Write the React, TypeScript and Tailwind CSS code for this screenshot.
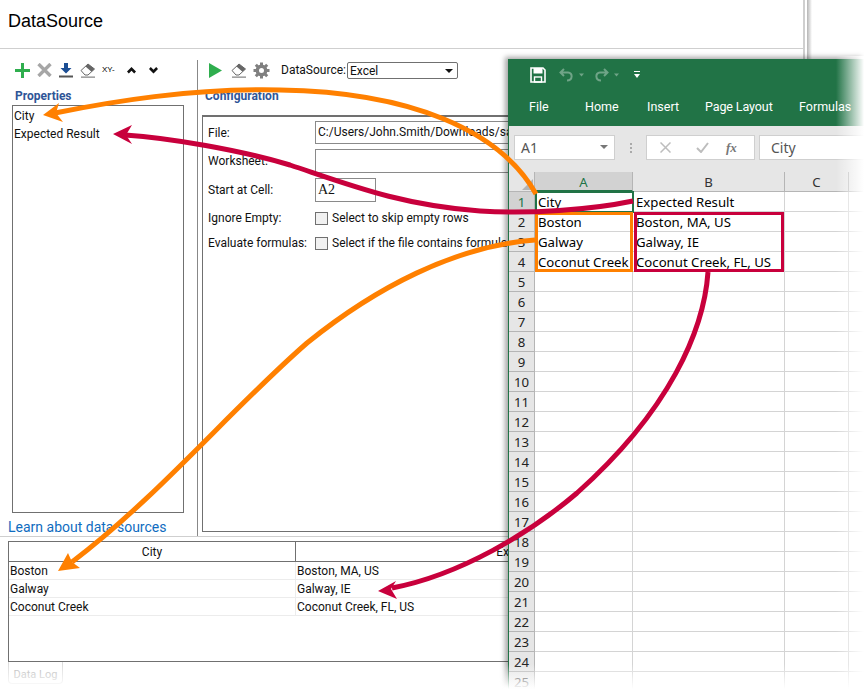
const ROWS = [
  { city: 'Boston', result: 'Boston, MA, US' },
  { city: 'Galway', result: 'Galway, IE' },
  { city: 'Coconut Creek', result: 'Coconut Creek, FL, US' },
];

const SHEET = [
  ['City', 'Expected Result'],
  ['Boston', 'Boston, MA, US'],
  ['Galway', 'Galway, IE'],
  ['Coconut Creek', 'Coconut Creek, FL, US'],
];

const ROW_NUMBERS = Array.from({ length: 25 }, (_, i) => i + 1);

function Eraser() {
  return (
    <svg width="16" height="15" viewBox="0 0 16 15">
      <path d="M1 7.5 L8 1 L14.5 6 L8 12 L5 12 Z" fill="#fff" stroke="#666" strokeWidth="1" />
      <path d="M5.5 3.5 L8 1 L14.5 6 L11.5 8.7 Z" fill="#666" />
      <rect x="1" y="13.6" width="14" height="1" fill="#666" />
    </svg>
  );
}

function Toolbar() {
  return (
    <div className="flex items-center h-[20px] pl-[15px]">
      <svg width="15" height="15" viewBox="0 0 15 15" className="mr-[7px]">
        <path d="M6 0h3v6h6v3H9v6H6V9H0V6h6z" fill="#2fae4e" />
      </svg>
      <svg width="15" height="14" viewBox="0 0 15 14" className="mr-[7px]">
        <path d="M1.5 1 L13.5 13 M13.5 1 L1.5 13" stroke="#a6a6a6" strokeWidth="3.4" />
      </svg>
      <svg width="14" height="15" viewBox="0 0 14 15" className="mr-[7px]">
        <path d="M5 0h4v5h3.5L7 10.5 1.5 5H5z" fill="#1c4e94" />
        <rect x="0" y="12.5" width="14" height="2" fill="#555" />
      </svg>
      <div className="mr-[6px]">
        <Eraser />
      </div>
      <span className="text-[8px] leading-none text-black w-[16px] mr-[9px] font-['Liberation_Sans',sans-serif]">XY-</span>
      <svg width="9" height="7" viewBox="0 0 9 7" className="mr-[13px]">
        <path d="M4.5 0 L9 4.5 L7.2 6.5 L4.5 3.8 L1.8 6.5 L0 4.5 Z" fill="#111" />
      </svg>
      <svg width="9" height="7" viewBox="0 0 9 7">
        <path d="M0 2 L1.8 0 L4.5 2.7 L7.2 0 L9 2 L4.5 6.5 Z" fill="#111" />
      </svg>
    </div>
  );
}

function ConfigBar() {
  return (
    <div className="flex items-center h-[20px] pl-[11px]">
      <svg width="13" height="15" viewBox="0 0 13 15" className="mr-[9px]">
        <path d="M0 0 L13 7.5 L0 15 Z" fill="#2fae4e" />
      </svg>
      <div className="mr-[6px]">
        <Eraser />
      </div>
      <svg width="17" height="17" viewBox="0 0 17 17" className="mr-[11px]">
        <circle cx="8.5" cy="8.5" r="4.2" fill="none" stroke="#808080" strokeWidth="3.4" />
        <path
          d="M8.5 0.5 V4 M8.5 13 V16.5 M0.5 8.5 H4 M13 8.5 H16.5 M2.8 2.8 L5.3 5.3 M11.7 11.7 L14.2 14.2 M14.2 2.8 L11.7 5.3 M5.3 11.7 L2.8 14.2"
          stroke="#808080"
          strokeWidth="3"
        />
      </svg>
      <span className="w-[66px] leading-[22px]">DataSource:</span>
      <div className="relative w-[111px] h-[17px] border border-[#707070] rounded-[2px] pl-[2px] leading-[16px]">
        Excel
        <svg width="8" height="4" viewBox="0 0 8 4" className="absolute right-[4px] top-[6px]">
          <path d="M0 0h8L4 4z" fill="#111" />
        </svg>
      </div>
    </div>
  );
}

function FormRow({ label, className, children }: { label: string; className: string; children: React.ReactNode }) {
  return (
    <div className={`flex items-center ${className}`}>
      <span className="w-[107px] shrink-0">{label}</span>
      {children}
    </div>
  );
}

function CheckRow({ label, text, className }: { label: string; text: string; className: string }) {
  return (
    <FormRow label={label} className={className}>
      <div className="w-[13px] h-[13px] border border-[#707070] bg-[#f1f1f1] mr-[4px] shrink-0" />
      <span className="whitespace-nowrap">{text}</span>
    </FormRow>
  );
}

function DataSourceWindow() {
  return (
    <div className="absolute left-0 top-0 w-[805px] h-[689px] bg-white border-r-[2px] border-[#cfcfcf] text-[12px] text-[#111] font-['Roboto',sans-serif]">
      <div className="h-[49px] border-b border-[#cfcfcf] pl-[8px] pt-[9px] text-[18px] leading-[24px] text-black font-['Liberation_Sans',sans-serif]">
        DataSource
      </div>
      <div className="flex h-[487px]">
        <div className="w-[197px] pt-[11px] shrink-0">
          <Toolbar />
          <div className="pl-[15px] mt-[9px] h-[15px] leading-[14px] font-bold text-[#2f5597]">Properties</div>
          <div className="ml-[12px] mt-[1px] w-[172px] h-[408px] border border-[#707070] pl-[1px] pt-[1px] leading-[18px]">
            <div>City</div>
            <div>Expected Result</div>
          </div>
          <a className="block pl-[8px] mt-[5px] text-[14px] leading-[18px] text-[#0f6cc0] whitespace-nowrap">Learn about data sources</a>
        </div>
        <div className="w-[1px] bg-[#888] mt-[11px] h-[476px] shrink-0" />
        <div className="flex-1 pt-[11px]">
          <ConfigBar />
          <div className="pl-[7px] mt-[9px] h-[15px] leading-[14px] font-bold text-[#2f5597]">Configuration</div>
          <div className="ml-[4px] mt-[11px] h-[417px] border border-[#707070] border-t-[2px] pl-[5px] pt-[4px]">
            <FormRow label="File:" className="h-[23px]">
              <div className="flex-1 h-[23px] border border-[#8a8a8a] pl-[2px] leading-[21px] mr-[6px] whitespace-nowrap">C:/Users/John.Smith/Downloads/sample.xlsx</div>
            </FormRow>
            <FormRow label="Worksheet:" className="h-[24px] mt-[5px]">
              <div className="flex-1 h-[24px] border border-[#8a8a8a] mr-[6px]" />
            </FormRow>
            <FormRow label="Start at Cell:" className="h-[24px] mt-[5px]">
              <div className="w-[61px] h-[24px] border border-[#8a8a8a] pl-[2px] leading-[22px] text-[14px] font-['Liberation_Serif',serif]">A2</div>
            </FormRow>
            <CheckRow label="Ignore Empty:" text="Select to skip empty rows" className="h-[14px] mt-[9px]" />
            <CheckRow label="Evaluate formulas:" text="Select if the file contains formulas" className="h-[14px] mt-[11px]" />
          </div>
        </div>
      </div>
      <div className="h-[1px] bg-[#cfcfcf]" />
      <div className="ml-[8px] mr-[8px] mt-[4px] h-[121px] border border-[#707070]">
        <div className="flex h-[20px] border-b-[1px] border-[#707070] leading-[21px]">
          <div className="w-[287px] text-center border-r border-[#707070]">City</div>
          <div className="flex-1 text-center pr-[12px]">Expected Result</div>
        </div>
        {ROWS.map((row) => (
          <div key={row.city} className="flex h-[18px] border-b border-[#ececec] leading-[19px]">
            <div className="w-[287px] pl-[1px] border-r border-[#ececec]">{row.city}</div>
            <div className="flex-1 pl-[1px]">{row.result}</div>
          </div>
        ))}
      </div>
      <div className="ml-[8px] w-[55px] h-[22px] border border-t-0 border-[#dcdcdc] rounded-b-[4px] text-[11px] leading-[26px] text-center text-[#b5b5b5]">Data Log</div>
    </div>
  );
}

function ExcelRibbon() {
  return (
    <div className="h-[67px] bg-[#217346] text-white">
      <div className="flex items-center h-[31px] pl-[21px]">
        <svg width="16" height="16" viewBox="0 0 16 16" className="mr-[13px]">
          <path d="M1 1 H13 L15 3 V15 H1 Z" fill="none" stroke="#fff" strokeWidth="1.6" />
          <rect x="3.5" y="1" width="9" height="5.5" fill="#fff" />
          <rect x="4.5" y="10" width="7" height="5" fill="none" stroke="#fff" strokeWidth="1.4" />
        </svg>
        <svg width="32" height="14" viewBox="0 0 32 14" className="mr-[3px]" opacity="0.35">
          <path d="M5 1 L1.5 4.5 L5 8 M2 4.5 H9 C14 4.5 14 12.5 8 12.5" fill="none" stroke="#fff" strokeWidth="2" />
          <path d="M20 5.5 h5 l-2.5 3 z" fill="#fff" />
        </svg>
        <svg width="32" height="14" viewBox="0 0 32 14" className="mr-[8px]" opacity="0.35">
          <path d="M10 1 L13.5 4.5 L10 8 M13 4.5 H6 C1 4.5 1 12.5 7 12.5" fill="none" stroke="#fff" strokeWidth="2" />
          <path d="M20 5.5 h5 l-2.5 3 z" fill="#fff" />
        </svg>
        <svg width="6" height="7" viewBox="0 0 6 7">
          <rect width="6" height="1" fill="#fff" />
          <path d="M0 3h6L3 7z" fill="#fff" />
        </svg>
      </div>
      <div className="flex items-center h-[36px] text-[12.5px] pb-[1px] whitespace-nowrap font-['Roboto',sans-serif]">
        <span className="pl-[20px] w-[76px]">File</span>
        <span className="w-[62px]">Home</span>
        <span className="w-[58px]">Insert</span>
        <span className="w-[94px] tracking-[-0.1px]">Page Layout</span>
        <span>Formulas</span>
      </div>
    </div>
  );
}

function FormulaBar() {
  return (
    <div className="flex items-center h-[46px] pb-[3px] bg-[#e6e6e6] text-[14px] text-[#555] pl-[5px]">
      <div className="relative w-[101px] h-[25px] bg-white border border-[#cfcfcf] pl-[6px] leading-[23px] shrink-0">
        A1
        <svg width="8" height="4" viewBox="0 0 8 4" className="absolute right-[6px] top-[9px]">
          <path d="M0 0h8L4 4z" fill="#777" />
        </svg>
      </div>
      <div className="w-[31px] flex flex-col items-center gap-[2px] shrink-0">
        <div className="w-[2px] h-[2px] bg-[#aaa]" />
        <div className="w-[2px] h-[2px] bg-[#aaa]" />
        <div className="w-[2px] h-[2px] bg-[#aaa]" />
      </div>
      <div className="flex items-center w-[109px] h-[25px] bg-white border border-[#cfcfcf] mr-[4px] shrink-0">
        <svg width="11" height="11" viewBox="0 0 11 11" className="ml-[13px] mr-[25px]">
          <path d="M0.5 0.5 L10.5 10.5 M10.5 0.5 L0.5 10.5" stroke="#bdbdbd" strokeWidth="1.5" />
        </svg>
        <svg width="13" height="11" viewBox="0 0 13 11" className="mr-[17px]">
          <path d="M1 6 L5 10 L12 1" fill="none" stroke="#bdbdbd" strokeWidth="2" />
        </svg>
        <span className="text-[13px] leading-none italic font-bold text-[#777] font-['Liberation_Serif',serif]">fx</span>
      </div>
      <div className="w-[120px] h-[25px] bg-white border border-[#cfcfcf] pl-[11px] leading-[23px] shrink-0">City</div>
    </div>
  );
}

function ExcelGrid() {
  return (
    <div className="relative flex text-[13.2px] text-black">
      <div className="w-[26px] shrink-0 bg-[#e6e6e6]">
        <div className="relative h-[20px] border-b border-r border-[#b5b5b5]">
          <div className="absolute right-[1px] bottom-[1px] w-0 h-0 border-l-[11px] border-l-transparent border-b-[11px] border-b-[#b4b4b4]" />
        </div>
        {ROW_NUMBERS.map((n) => (
          <div
            key={n}
            className={
              n === 1
                ? 'h-[20px] border-b border-r border-[#b5b5b5] bg-[#d2d2d2] text-[#217346] text-center leading-[21px]'
                : 'h-[20px] border-b border-r border-[#b5b5b5] text-center leading-[21px] text-[#222]'
            }
          >
            {n}
          </div>
        ))}
      </div>
      <div className="flex-1">
        <div className="flex h-[20px] leading-[20px] text-center text-[#333]">
          <div className="w-[98px] bg-[#d2d2d2] border-r border-[#b5b5b5] border-b-2 border-b-[#217346] text-[#217346]">A</div>
          <div className="w-[152px] bg-[#e6e6e6] border-r border-b border-[#b5b5b5]">B</div>
          <div className="w-[64px] bg-[#e6e6e6] border-r border-b border-[#b5b5b5]">C</div>
          <div className="flex-1 bg-[#e6e6e6] border-b border-[#b5b5b5]" />
        </div>
        {ROW_NUMBERS.map((n, i) => (
          <div key={n} className="flex h-[20px] leading-[21px] whitespace-nowrap">
            <div className="w-[98px] border-r border-b border-[#d4d4d4] pl-[3px]">{SHEET[i]?.[0]}</div>
            <div className="w-[152px] border-r border-b border-[#d4d4d4] pl-[3px]">{SHEET[i]?.[1]}</div>
            <div className="w-[64px] border-r border-b border-[#d4d4d4]" />
            <div className="flex-1 border-b border-[#d4d4d4]" />
          </div>
        ))}
      </div>
      <div className="absolute left-[26px] top-[19px] w-[99px] h-[22px] border-2 border-[#217346]" />
      <div className="absolute left-[26px] top-[40px] w-[98px] h-[60px] border-[3px] border-[#ff8000]" />
      <div className="absolute left-[125px] top-[40px] w-[150px] h-[60px] border-[3px] border-[#c8003c]" />
    </div>
  );
}

function ExcelWindow() {
  return (
    <div className="absolute left-[508px] top-[59px] w-[356px] h-[630px] overflow-hidden bg-white border-l border-[#217346] shadow-[-3px_-2px_5px_rgba(0,0,0,0.35)] font-['Noto_Sans',sans-serif]">
      <ExcelRibbon />
      <FormulaBar />
      <ExcelGrid />
    </div>
  );
}

function Arrows() {
  return (
    <svg width="864" height="689" viewBox="0 0 864 689" fill="none" className="absolute left-0 top-0">
      <g stroke="#ff8000" strokeWidth="5">
        <path d="M536 194 C500 130 410 92 280 90 C190 88 110 102 55 113" />
        <path d="M535 240 C455 246 375 288 307 343 C230 410 160 495 72 562" />
      </g>
      <g stroke="#c8003c" strokeWidth="5">
        <path d="M633 201 C590 210 530 214 480 211 C400 205 350 185 290 165 C240 150 170 138 125 135" />
        <path d="M708 272 C704 330 670 410 577 493 C530 533 460 575 392 588" />
      </g>
      <path d="M43 115 L59 103 L56 113 L63 122 Z" fill="#ff8000" />
      <path d="M113 134 L132 125 L126 135 L132 144 Z" fill="#c8003c" />
      <path d="M58 571 L68 553 L72 562 L80 568 Z" fill="#ff8000" />
      <path d="M378 591 L396 581 L391 589 L397 599 Z" fill="#c8003c" />
    </svg>
  );
}

export default function App() {
  return (
    <div className="relative w-[864px] h-[689px] overflow-hidden bg-white">
      <DataSourceWindow />
      <div className="absolute left-[807px] top-0 w-[5px] h-[60px] bg-gradient-to-r from-[#b5b5b5] to-white" />
      <ExcelWindow />
      <Arrows />
      {/* the picture fades out at the right and bottom edges */}
      <div className="absolute left-[836px] top-[56px] w-[28px] h-[633px] bg-gradient-to-r from-white/0 to-white" />
      <div className="absolute left-0 top-[664px] w-[864px] h-[25px] bg-gradient-to-b from-white/0 to-white" />
    </div>
  );
}
